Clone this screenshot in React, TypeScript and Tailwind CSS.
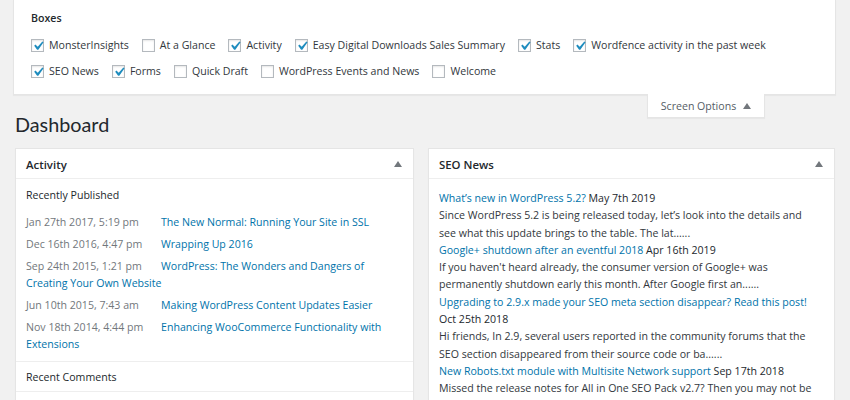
import React from "react";

function Cb({ checked }: { checked: boolean }) {
  return (
    <span className="relative w-[13px] h-[13px] shrink-0 border border-[#b4b9be] bg-white shadow-[inset_0_1px_2px_rgba(0,0,0,0.1)]">
      {checked && (
        <svg viewBox="0 0 20 20" className="absolute left-[-3px] top-[-3px] w-[18px] h-[18px]">
          <path d="M14.83 4.89l1.34.94-5.81 8.38H9.02L5.78 9.670l1.34-1.25 2.57 2.4z" fill="#1e8cbe" />
        </svg>
      )}
    </span>
  );
}

function Opt({ label, checked }: { label: string; checked: boolean }) {
  return (
    <label className="flex items-center gap-[5px] whitespace-nowrap">
      <Cb checked={checked} />
      <span>{label}</span>
    </label>
  );
}

function Tri() {
  return (
    <svg viewBox="0 0 8 6" className="w-[8px] h-[6px]">
      <path d="M0 6 L4 0 L8 6 Z" fill="#72777c" />
    </svg>
  );
}

const published = [
  ["Jan 27th 2017, 5:19 pm", "The New Normal: Running Your Site in SSL"],
  ["Dec 16th 2016, 4:47 pm", "Wrapping Up 2016"],
  ["Sep 24th 2015, 1:21 pm", "WordPress: The Wonders and Dangers of Creating Your Own Website"],
  ["Jun 10th 2015, 7:43 am", "Making WordPress Content Updates Easier"],
  ["Nov 18th 2014, 4:44 pm", "Enhancing WooCommerce Functionality with Extensions"],
];

const news = [
  {
    title: "What\u2019s new in WordPress 5.2?",
    date: "May 7th 2019",
    text: "Since WordPress 5.2 is being released today, let\u2019s look into the details and see what this update brings to the table. The lat......",
  },
  {
    title: "Google+ shutdown after an eventful 2018",
    date: "Apr 16th 2019",
    text: "If you haven't heard already, the consumer version of Google+ was permanently shutdown early this month. After Google first an......",
  },
  {
    title: "Upgrading to 2.9.x made your SEO meta section disappear? Read this post!",
    date: "Oct 25th 2018",
    text: "Hi friends, In 2.9, several users reported in the community forums that the SEO section disappeared from their source code or ba......",
  },
  {
    title: "New Robots.txt module with Multisite Network support",
    date: "Sep 17th 2018",
    text: "Missed the release notes for All in One SEO Pack v2.7? Then you may not be aware that we\u2019ve completely overhauled the Robo......",
  },
];

export default function App() {
  return (
    <div className="w-[850px] h-[400px] overflow-hidden bg-[#f1f1f1] text-[#32373c] font-['Open_Sans',sans-serif] text-[10.6px] leading-[17px]">
      <div className="ml-[13px] w-[823px] h-[95px] bg-white border border-t-0 border-[#e5e5e5] shadow-[0_1px_1px_rgba(0,0,0,0.04)] px-[17px] pt-[10px]">
        <div className="font-semibold text-[#23282d] leading-[17px]">Boxes</div>
        <div className="mt-[10px] flex gap-x-[13px]">
          <Opt label="MonsterInsights" checked />
          <Opt label="At a Glance" checked={false} />
          <Opt label="Activity" checked />
          <Opt label="Easy Digital Downloads Sales Summary" checked />
          <Opt label="Stats" checked />
          <Opt label="Wordfence activity in the past week" checked />
        </div>
        <div className="mt-[9px] flex gap-x-[13px]">
          <Opt label="SEO News" checked />
          <Opt label="Forms" checked />
          <Opt label="Quick Draft" checked={false} />
          <Opt label="WordPress Events and News" checked={false} />
          <Opt label="Welcome" checked={false} />
        </div>
      </div>

      <div className="flex items-start justify-between">
        <h1 className="ml-[15px] mt-[15px] font-['Lato',sans-serif] text-[19.8px] leading-[29px] font-normal text-[#23282d]">Dashboard</h1>
        <div className="mr-[85px] -mt-[1px] w-[118px] h-[24px] pt-[1px] bg-white border border-t-0 border-[#e5e5e5] shadow-[0_1px_1px_rgba(0,0,0,0.04)] flex items-center justify-center gap-[7px] text-[#555d66]">
          <span>Screen Options</span>
          <Tri />
        </div>
      </div>

      <div className="mt-[9px] ml-[15px] flex items-start gap-[14px]">
        <div className="w-[399px] bg-white border border-[#e5e5e5] shadow-[0_1px_1px_rgba(0,0,0,0.04)]">
          <div className="h-[30px] px-[10px] border-b border-[#eeeeee] flex items-center justify-between">
            <span className="font-semibold text-[11.4px] text-[#23282d] mt-[1px]">Activity</span>
            <span className="mr-[1px]"><Tri /></span>
          </div>
          <div className="px-[10px] pt-[8px] pb-[3px] border-b border-[#eeeeee]">
            <div className="text-[#23282d]">Recently Published</div>
            <ul className="mt-[10px]">
              {published.map(([d, t]) => (
                <li key={d} className="mb-[5px] leading-[17px]">
                  <span className="inline-block align-top w-[135px] text-[#72777c]">{d}</span>
                  <a className="text-[#0073aa]">{t}</a>
                </li>
              ))}
            </ul>
          </div>
          <div className="px-[10px] pt-[7px] pb-[5px] border-b border-[#eeeeee] text-[#23282d]">Recent Comments</div>
          <div className="h-[20px]" />
        </div>

        <div className="w-[407px] bg-white border border-[#e5e5e5] shadow-[0_1px_1px_rgba(0,0,0,0.04)]">
          <div className="h-[30px] px-[10px] border-b border-[#eeeeee] flex items-center justify-between">
            <span className="font-semibold text-[11.4px] text-[#23282d] mt-[1px]">SEO News</span>
            <span className="mr-[1px]"><Tri /></span>
          </div>
          <div className="pl-[10px] pr-[14px] pt-[11px] leading-[17.3px]">
            {news.map((n) => (
              <div key={n.title}>
                <a className="text-[#0073aa]">{n.title}</a> <span className="text-[#23282d]">{n.date}</span>
                <div>{n.text}</div>
              </div>
            ))}
          </div>
        </div>
      </div>
    </div>
  );
}
